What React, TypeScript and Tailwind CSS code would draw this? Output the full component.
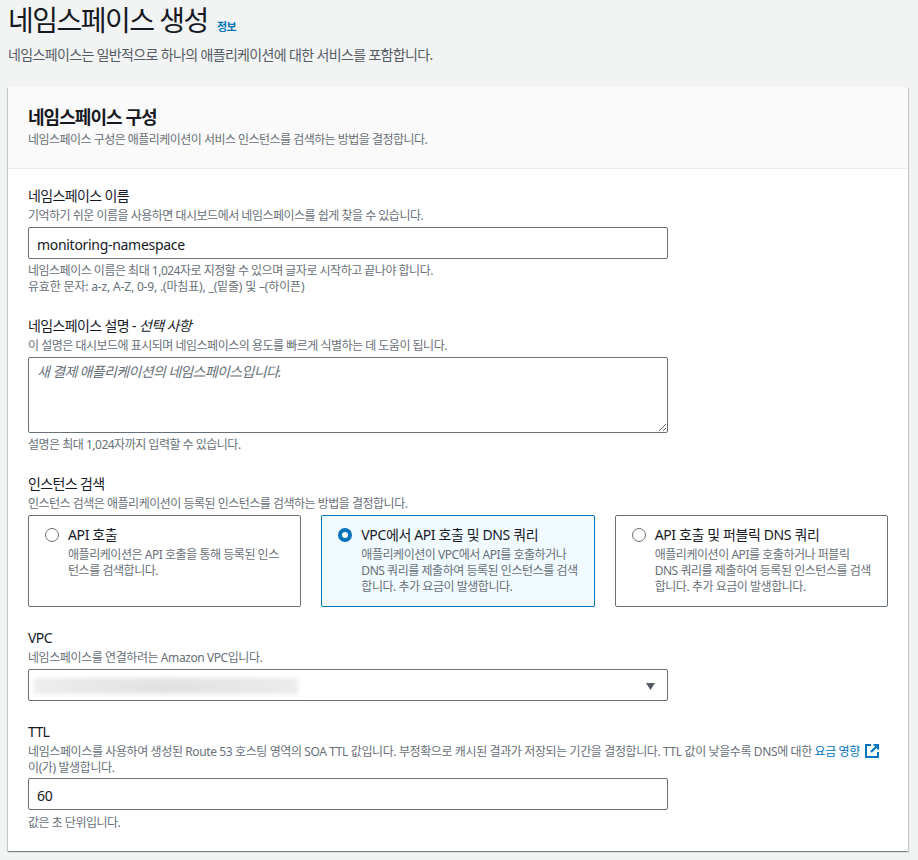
import React from 'react';

const fieldLabel = 'block mb-[2px] text-[14px] leading-[20px] tracking-[-0.62px] text-[#16191f]';
const fieldDesc = 'block text-[12px] leading-[16px] tracking-[-0.5px] text-[#687078]';
const inputBox =
  'block w-[640px] h-[32px] rounded-[2px] border border-[#687078] bg-white px-2 pt-[2px] text-[14px] leading-[22px] tracking-[-0.3px] text-[#16191f] outline-none';

const options = [
  {
    title: 'API 호출',
    lines: ['애플리케이션은 API 호출을 통해 등록된 인스', '턴스를 검색합니다.'],
    selected: false,
  },
  {
    title: 'VPC에서 API 호출 및 DNS 쿼리',
    lines: [
      '애플리케이션이 VPC에서 API를 호출하거나',
      'DNS 쿼리를 제출하여 등록된 인스턴스를 검색',
      '합니다. 추가 요금이 발생합니다.',
    ],
    selected: true,
  },
  {
    title: 'API 호출 및 퍼블릭 DNS 쿼리',
    lines: [
      '애플리케이션이 API를 호출하거나 퍼블릭',
      'DNS 쿼리를 제출하여 등록된 인스턴스를 검색',
      '합니다. 추가 요금이 발생합니다.',
    ],
    selected: false,
  },
];

const ExternalIcon = () => (
  <svg viewBox="0 0 16 16" className="inline-block w-[16px] h-[16px] ml-[4px] -my-1 align-[1px]" fill="none" stroke="#0073bb" strokeWidth="2">
    <path d="M7 2H2v12h12V9" />
    <path d="M9.5 2H14v4.5" strokeWidth="2.2" />
    <path d="M13.5 2.5L7 9" strokeWidth="2.2" />
  </svg>
);

export default function App() {
  return (
    <div
      className="min-h-[860px] bg-[#f2f3f3] text-[#16191f] px-2 pb-[9px]"
      style={{ fontFamily: '"Noto Sans", "Noto Sans CJK KR", sans-serif' }}
    >
      {/* Page header */}
      <div className="h-[87px]">
        <div className="flex items-start h-[44px]">
          <h1 className="text-[28px] leading-[40px] tracking-[-1.5px] font-normal text-[#16191f]">네임스페이스 생성</h1>
          <a className="ml-[9px] mt-[17px] text-[11px] leading-[20px] tracking-[-0.4px] font-bold text-[#0073bb]">정보</a>
        </div>
        <p className="text-[14px] leading-[20px] mt-[1px] tracking-[-0.65px] text-[#545b64]">
          네임스페이스는 일반적으로 하나의 애플리케이션에 대한 서비스를 포함합니다.
        </p>
      </div>

      {/* Card */}
      <div className="w-[900px] bg-white shadow-[0_1px_1px_0_rgba(0,28,36,0.3),1px_1px_1px_0_rgba(0,28,36,0.15),-1px_1px_1px_0_rgba(0,28,36,0.15)]">
        <div className="h-[82px] bg-[#fafafa] border-b border-[#eaeded] px-5 pt-[17px]">
          <h2 className="text-[18px] leading-[26px] tracking-[-0.95px] font-bold text-[#16191f]">네임스페이스 구성</h2>
          <p className="text-[12px] leading-[16px] mt-[2px] tracking-[-0.53px] text-[#687078]">
            네임스페이스 구성은 애플리케이션이 서비스 인스턴스를 검색하는 방법을 결정합니다.
          </p>
        </div>

        <div className="px-5 pt-[17px] pb-[20px]">
          <label className={fieldLabel}>네임스페이스 이름</label>
          <span className={fieldDesc}>기억하기 쉬운 이름을 사용하면 대시보드에서 네임스페이스를 쉽게 찾을 수 있습니다.</span>
          <input readOnly value="monitoring-namespace" className={`${inputBox} mt-[3px]`} />
          <span className={`${fieldDesc} mt-[4px]`}>네임스페이스 이름은 최대 1,024자로 지정할 수 있으며 글자로 시작하고 끝나야 합니다.</span>
          <span className={`${fieldDesc} tracking-[-0.17px]`}>유효한 문자: a-z, A-Z, 0-9, .(마침표), _(밑줄) 및 –(하이픈)</span>

          <label className={`${fieldLabel} mt-[21px]`}>
            네임스페이스 설명 - <i className="italic">선택 사항</i>
          </label>
          <span className={fieldDesc}>이 설명은 대시보드에 표시되며 네임스페이스의 용도를 빠르게 식별하는 데 도움이 됩니다.</span>
          <textarea
            readOnly
            placeholder="새 결제 애플리케이션의 네임스페이스입니다."
            className="block w-[640px] h-[76px] mt-[3px] rounded-[2px] border border-[#687078] bg-white px-2 py-[4px] text-[14px] leading-[20px] tracking-[-0.66px] outline-none placeholder:italic placeholder:text-[#687078]"
          />
          <span className={`${fieldDesc} mt-[4px]`}>설명은 최대 1,024자까지 입력할 수 있습니다.</span>

          <label className={`${fieldLabel} mt-[21px]`}>인스턴스 검색</label>
          <span className={fieldDesc}>인스턴스 검색은 애플리케이션이 등록된 인스턴스를 검색하는 방법을 결정합니다.</span>
          <div className="grid grid-cols-3 gap-5 mt-[3px]">
            {options.map(o => (
              <div
                key={o.title}
                className={`h-[92px] rounded-[2px] border px-[16px] pt-[9px] flex gap-[9px] ${
                  o.selected ? 'border-[#0073bb] bg-[#f1faff]' : 'border-[#687078] bg-white'
                }`}
              >
                <span
                  className={`shrink-0 w-[14px] h-[14px] mt-[3px] rounded-full ${
                    o.selected ? 'border-[4px] border-[#0073bb] bg-white' : 'border border-[#687078] bg-white'
                  }`}
                />
                <div>
                  <div className="text-[14px] leading-[20px] mb-[2px] tracking-[-0.38px] text-[#16191f] whitespace-nowrap">{o.title}</div>
                  {o.lines.map(line => (
                    <div key={line} className="text-[12px] leading-[16px] tracking-[-0.46px] text-[#687078] whitespace-nowrap">
                      {line}
                    </div>
                  ))}
                </div>
              </div>
            ))}
          </div>

          <label className={`${fieldLabel} mt-[21px]`}>VPC</label>
          <span className={`${fieldDesc} tracking-[-0.42px]`}>네임스페이스를 연결하려는 Amazon VPC입니다.</span>
          <div className={`${inputBox} mt-[3px] flex items-center justify-between pl-[5px] pr-[11px] pt-0`}>
            <div className="w-[264px] h-[16px] bg-linear-to-r from-[#ededed] via-[#e2e2e2] to-[#ececec] blur-[2px]" />
            <svg viewBox="0 0 12 10" className="w-[11px] h-[9px]">
              <path d="M1 1h10L6 9z" fill="#545b64" />
            </svg>
          </div>

          <label className={`${fieldLabel} mt-[21px]`}>TTL</label>
          <span className={`${fieldDesc} tracking-[-0.39px]`}>
            네임스페이스를 사용하여 생성된 Route 53 호스팅 영역의 SOA TTL 값입니다. 부정확으로 캐시된 결과가 저장되는 기간을 결정합니다. TTL 값이 낮을수록 DNS에 대한{' '}
            <a className="text-[#0073bb]">요금 영향</a>
            <ExternalIcon />
            <br />
            이(가) 발생합니다.
          </span>
          <input readOnly value="60" className={`${inputBox} mt-[2px]`} />
          <span className={`${fieldDesc} mt-[5px]`}>값은 초 단위입니다.</span>
        </div>
      </div>
    </div>
  );
}
